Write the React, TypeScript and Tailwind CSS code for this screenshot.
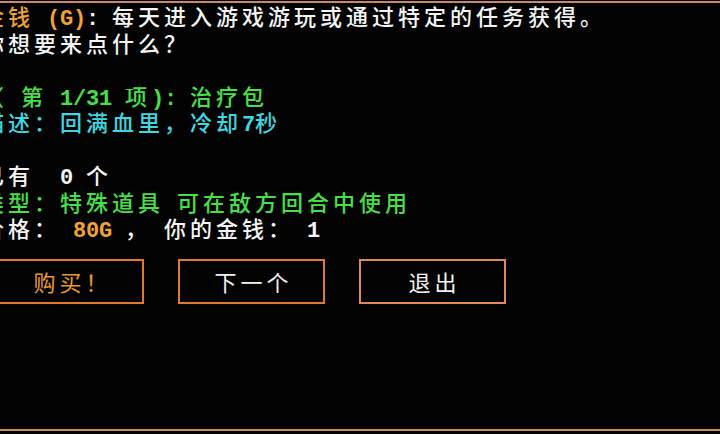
import React from "react";

const A = ({ children, className = "" }: { children: React.ReactNode; className?: string }) => (
  <span className={"font-['Liberation_Mono'] font-bold tracking-[-0.2px] " + className}>{children}</span>
);

const Line = ({ children, className = "" }: { children?: React.ReactNode; className?: string }) => (
  <div className={"h-[26.5px] leading-[26.5px] whitespace-pre " + className}>{children}</div>
);

export default function App() {
  return (
    <div className="w-[720px] h-[434px] overflow-hidden bg-[#030303] pt-[1px] pb-[3px] font-['Liberation_Mono','Noto_Sans_CJK_SC',sans-serif]">
      <div className="h-full border-y-2 border-[#c98a6c] flex flex-col">
        <div className="ml-[-18px] pt-[4px] text-[22px] font-medium tracking-[4px] text-[#f4f4f4] font-['Liberation_Mono','Noto_Sans_CJK_SC',sans-serif]">
          <Line>
            <span className="text-[#f2a235]">
              金钱<A> (G)</A>
            </span>
            <A>: </A>每天进入游戏游玩或通过特定的任务获得。
          </Line>
          <Line>你想要来点什么？</Line>
          <Line />
          <Line className="text-[#48e048]">
            （<A> </A>第<A> 1/31 </A>项<A>): </A>治疗包
          </Line>
          <Line className="text-[#3ed8e2]">
            描述：回满血里，冷却<A>7</A>秒
          </Line>
          <Line />
          <Line>
            已有<A>  0 </A>个
          </Line>
          <Line className="text-[#48e048]">
            类型：特殊道具<A> </A>可在敌方回合中使用
          </Line>
          <Line>
            价格：<A> </A>
            <A className="text-[#f2a235]">80G</A>
            <A> </A>，<A> </A>你的金钱：<A> 1</A>
          </Line>
        </div>
        <div className="ml-[-3px] mt-[13px] flex gap-[34px] text-[22px] tracking-[4px] font-['Noto_Sans_CJK_SC',sans-serif]">
          <div className="w-[147px] h-[45px] border-2 border-[#e07a30] flex items-center justify-center pl-[4px] text-[#eb9a32]">
            购买！
          </div>
          <div className="w-[147px] h-[45px] border-2 border-[#e07a30] flex items-center justify-center pl-[4px] text-[#f2f2f2]">
            下一个
          </div>
          <div className="w-[147px] h-[45px] border-2 border-[#e08a5a] flex items-center justify-center pl-[4px] text-[#f2f2f2]">
            退出
          </div>
        </div>
      </div>
    </div>
  );
}
